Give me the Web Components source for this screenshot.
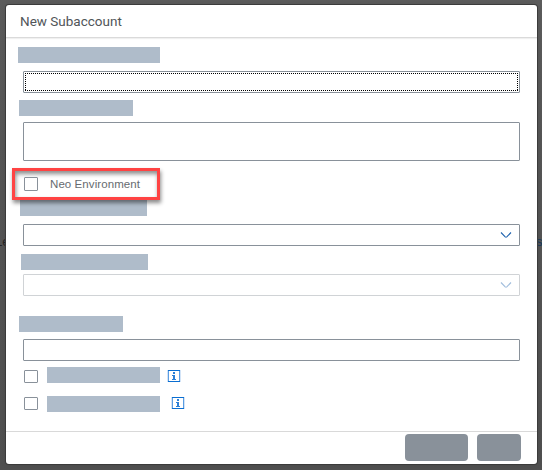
<!DOCTYPE html>
<html lang="en"><head><meta charset="utf-8"><title>New Subaccount</title>
<style>html,body{margin:0;height:100%;overflow:hidden;background:#555}</style></head>
<body><subaccount-page></subaccount-page>
<script>
const define=(name,html,init)=>customElements.define(name,class extends HTMLElement{
  connectedCallback(){
    if(this.shadowRoot)return;
    this.attachShadow({mode:'open'}).innerHTML=html;
    if(init)init(this,this.shadowRoot);
  }
});
const sized=el=>{
  for(const k of ['w','h'])if(el.hasAttribute(k))el.style[k==='w'?'width':'height']=el.getAttribute(k)+'px';
  if(el.hasAttribute('m'))el.style.margin=el.getAttribute('m');
};
define('redacted-label',`<style>:host{display:block;flex:none;height:16px;background:#afbcca}</style>`,sized);
define('check-box',`<style>:host{display:block;flex:none;box-sizing:border-box;width:14px;height:14px;border:1px solid #89919a;border-radius:1px;background:#fff}</style>`,sized);
define('text-field',`<style>
:host{display:flex;flex:none;box-sizing:border-box;width:497px;height:22px;border:1px solid #89919a;border-radius:1px;background:#fff;justify-content:flex-end;align-items:center;padding-right:7px}
:host([disabled]){border-color:#d0d3d6}
:host([focused]){padding:1px}
:host([disabled]) svg{opacity:.42}
svg,i{display:none}
:host([select]) svg{display:block}
:host([focused]) i{display:block;flex:1;align-self:stretch;
 background:
 repeating-linear-gradient(90deg,#000 0 1px,transparent 1px 2px) 0 0/100% 1px no-repeat,
 repeating-linear-gradient(90deg,#000 0 1px,transparent 1px 2px) 0 100%/100% 1px no-repeat,
 repeating-linear-gradient(#000 0 1px,transparent 1px 2px) 0 0/1px 100% no-repeat,
 repeating-linear-gradient(#000 0 1px,transparent 1px 2px) 100% 0/1px 100% no-repeat}
</style><i></i><svg width="12" height="8" viewBox="0 0 12 8"><path d="M1 1.5 L5.2 5.9 Q6 6.5 6.8 5.9 L11 1.5" fill="none" stroke="#1d62ae" stroke-width="1.1"/></svg>`,sized);
define('info-icon',`<style>:host{display:block;flex:none;width:14px;height:12px}svg{display:block}</style>
<svg width="14" height="12" viewBox="0 0 14 12"><path d="M.5 0V12M13.5 0V12" stroke="#d3e4f7"/><path d="M1.5 0V12M12.5 0V12" stroke="#5c9de2"/><path d="M1 .5H13M1 11.5H13" stroke="#0a6ed1"/><path d="M6 2h2v2H6zM5 5h3v4h1v1H5V9h1V6H5z" fill="#2b7fd6"/></svg>`,sized);
define('form-row',`<style>:host{display:flex;flex:none;align-items:flex-start}</style><slot></slot>`,sized);
define('highlight-frame',`<style>:host{display:flex;flex:none;position:relative;z-index:1;box-sizing:border-box;width:148px;height:32px;border:3px solid #ff4343;padding:6px 0 0 9px;box-shadow:1px 3px 4px rgba(0,0,0,.45),inset 1px 3px 4px rgba(0,0,0,.45)}
span{font:11.5px/14px "Liberation Sans",Arial,sans-serif;color:#666b70;margin-left:12px;white-space:nowrap;letter-spacing:.08px}</style><slot name="control"></slot><span><slot></slot></span>`,sized);
define('action-button',`<style>:host{display:block;height:27px;border-radius:4px;background:#89919a}</style>`,sized);
define('modal-dialog',`<style>
:host{display:flex;flex-direction:column;width:531px;height:459px;border-radius:3px;background:#fff;box-shadow:0 0 0 1px #3b3b3b,0 0 6px rgba(0,0,0,.12);overflow:hidden;position:relative}
header{box-sizing:border-box;height:33px;flex:none;border-bottom:1px solid #dadada;box-shadow:0 1px 1px #f0f0f0;padding:7px 14px 0;font:13.5px/18px Roboto,"Liberation Sans",sans-serif;color:#515559}
header span{white-space:nowrap}
main{flex:1;display:flex;flex-direction:column;align-items:flex-start;min-height:0}
footer{display:flex;gap:9px;justify-content:flex-end;box-sizing:border-box;height:33px;flex:none;border-top:1px solid #d9d9d9;padding:2px 16px 0 0}
</style><header><span><slot name="title"></slot></span></header><main><slot></slot></main><footer><slot name="actions"></slot></footer>`);
define('subaccount-page',`<style>
:host{display:flex;position:relative;box-sizing:border-box;width:542px;height:470px;padding:5px 0 0 6px;background:linear-gradient(#5c5c5c,#565656 30%,#505050);overflow:hidden}
.behind{position:absolute;top:234px;font:13px/16px "Liberation Sans",sans-serif;color:#252525;white-space:nowrap}
.left{left:-5px}.right{left:536px;color:#17395c}
</style>
<span class="behind left">Le</span><span class="behind right">s</span>
<modal-dialog><span slot="title">New Subaccount</span>
<redacted-label w="142" m="9px 0 0 12px"></redacted-label>
<text-field focused m="8px 0 0 17px"></text-field>
<redacted-label w="114" m="7px 0 0 13px"></redacted-label>
<text-field h="39" m="6px 0 0 17px"></text-field>
<highlight-frame m="7px 0 0 6px"><check-box slot="control"></check-box>Neo Environment</highlight-frame>
<redacted-label w="127" m="0 0 0 14px"></redacted-label>
<text-field select m="8px 0 0 17px"></text-field>
<redacted-label w="127" m="8px 0 0 15px"></redacted-label>
<text-field select disabled m="4px 0 0 17px"></text-field>
<redacted-label w="104" m="20px 0 0 13px"></redacted-label>
<text-field m="7px 0 0 17px"></text-field>
<form-row h="16" m="6px 0 0 18px"><check-box h="13" m="3px 9px 0 0"></check-box><redacted-label w="113"></redacted-label><info-icon m="3px 0 0 7px"></info-icon></form-row>
<form-row h="16" m="13px 0 0 18px"><check-box h="13" m="1px 9px 0 0"></check-box><redacted-label w="113"></redacted-label><info-icon m="1px 0 0 11px"></info-icon></form-row>
<action-button slot="actions" w="63"></action-button><action-button slot="actions" w="44"></action-button>
</modal-dialog>`);
</script></body></html>
